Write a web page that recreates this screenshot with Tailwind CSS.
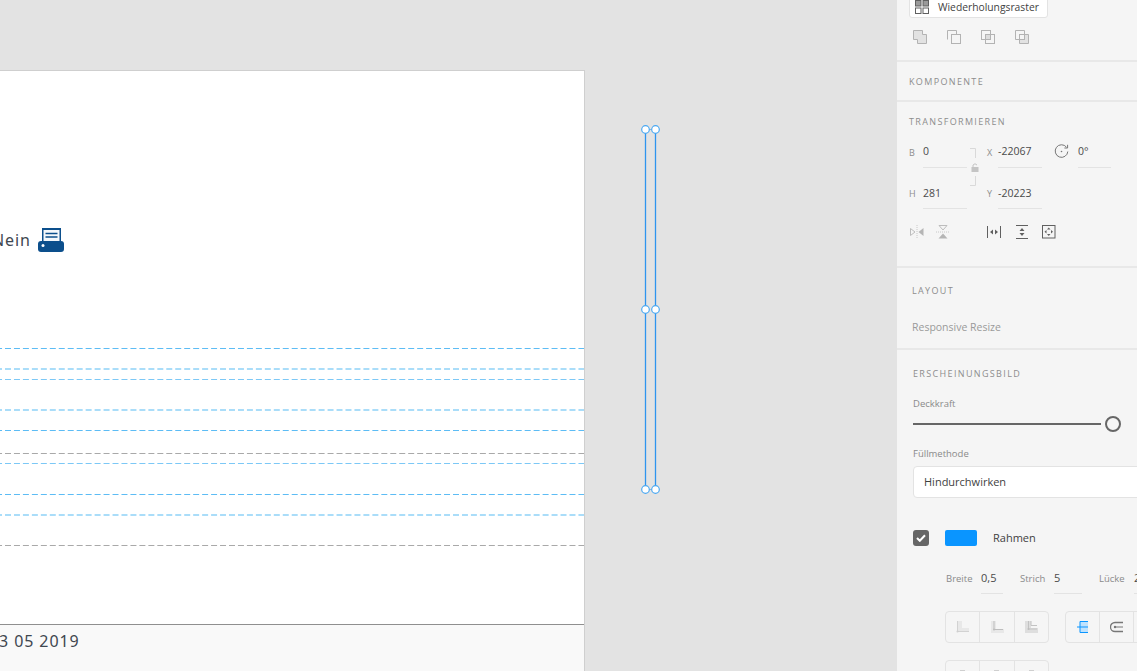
<!DOCTYPE html>
<html lang="de">
<head>
<meta charset="UTF-8">
<title>Eigenschaften</title>
<script src="https://cdn.jsdelivr.net/npm/@tailwindcss/browser@4"></script>
</head>
<body class="overflow-hidden">
<div class="flex h-[671px] w-[1137px] overflow-hidden font-['Open_Sans',sans-serif]">

  <!-- Canvas -->
  <div class="relative h-full w-[897px] shrink-0 overflow-hidden bg-[#e3e3e3]">
    <!-- Artboard -->
    <div class="absolute left-0 top-[70px] flex h-[601px] w-[585px] flex-col border-r border-t border-[#cfcfcf] bg-white">
      <div class="relative h-[553px] shrink-0">
        <div class="absolute left-[-8px] top-[157px] flex items-center gap-[7px]">
          <span class="font-['Noto_Sans',sans-serif] text-[16px] leading-5 tracking-[0.9px] text-[#3f4750]">Nein</span>
          <svg width="26" height="24" viewBox="0 0 26 24">
            <rect x="4" y="0" width="19" height="15" fill="#0c4f8c"/>
            <rect x="5.5" y="2" width="16" height="12" fill="#f4f8fb"/>
            <path d="M7.5 5.5h12M7.5 9h12" stroke="#0c4f8c" stroke-width="1.5"/>
            <path d="M3 13h20q3 0 3 3v5q0 3-3 3H3q-3 0-3-3v-5q0-3 3-3z" fill="#0c4f8c"/>
            <circle cx="5" cy="17.5" r="1.5" fill="#fff"/>
          </svg>
        </div>
      </div>
      <div class="flex-1 border-t border-[#8f8f8f] bg-[#f9f9f9]">
        <p class="ml-[-11px] mt-[6px] font-['Noto_Sans',sans-serif] text-[16px] leading-5 tracking-[0.9px] text-[#3f4750]">13 05 2019</p>
      </div>
    </div>

    <!-- Guide lines and selection -->
    <svg class="absolute left-0 top-0" width="897" height="671" fill="none">
      <g stroke-dasharray="6 2.96" stroke-dashoffset="3.96" stroke-width="1">
        <path d="M0 348.5H584" stroke="#5cbcf5"/>
        <path d="M0 369H584" stroke="#8fd2f8" stroke-width="1.4"/>
        <path d="M0 379.5H584" stroke="#7cc8f6"/>
        <path d="M0 410H584" stroke="#8fd2f8" stroke-width="1.4"/>
        <path d="M0 430.5H584" stroke="#5cbcf5"/>
        <path d="M0 453.5H584" stroke="#a9a9a9"/>
        <path d="M0 463.5H584" stroke="#7cc8f6"/>
        <path d="M0 494.5H584" stroke="#5cbcf5"/>
        <path d="M0 515H584" stroke="#8fd2f8" stroke-width="1.4"/>
        <path d="M0 545.5H584" stroke="#a9a9a9"/>
      </g>
      <path d="M645.5 129V489M655.5 129V489" stroke="#2f95ee" stroke-width="1.3"/>
      <path d="M645.5 129.5H655.5M645.5 489.5H655.5" stroke="#8fb4d4"/>
      <g fill="#fff" stroke="#4aa8f2" stroke-width="1.2">
        <circle cx="645.5" cy="129.5" r="3.8"/>
        <circle cx="655.5" cy="129.5" r="3.8"/>
        <circle cx="645.5" cy="309.5" r="3.8"/>
        <circle cx="655.5" cy="309.5" r="3.8"/>
        <circle cx="645.5" cy="489.5" r="3.8"/>
        <circle cx="655.5" cy="489.5" r="3.8"/>
      </g>
    </svg>
  </div>

  <!-- Property panel -->
  <div class="h-full w-[240px] shrink-0 overflow-hidden bg-[#f5f5f5] text-[#3f3f3f]">

    <div class="h-[60px] overflow-hidden pl-3">
      <div class="mt-[-4px] flex h-[22px] w-[139px] items-start gap-[9px] rounded-[3px] border border-[#e3e3e3] bg-white pl-[5px]">
        <svg class="mt-[3px]" width="14" height="14" viewBox="0 0 14 14" fill="none" stroke="#606060">
          <rect x="0.5" y="0.5" width="5.5" height="5.5" fill="#9a9a9a"/>
          <rect x="8" y="0.5" width="5.5" height="5.5" fill="#9a9a9a"/>
          <rect x="0.5" y="8" width="5.5" height="5.5"/>
          <rect x="8" y="8" width="5.5" height="5.5"/>
        </svg>
        <span class="mt-[2px] text-[10.3px] leading-4 text-[#3f3f3f]">Wiederholungsraster</span>
      </div>
      <div class="ml-[4px] mt-[12px] flex gap-[20px]">
        <svg width="14" height="14" viewBox="0 0 14 14" fill="none" stroke="#b3b3b3">
          <path d="M0.5 0.5H9.5V4.5H13.5V13.5H4.5V9.5H0.5Z" fill="#e2e2e2"/>
        </svg>
        <svg width="14" height="14" viewBox="0 0 14 14" fill="none" stroke="#b3b3b3">
          <path d="M0.5 9.5V0.5H9.5V4.5"/><rect x="4.5" y="4.5" width="9" height="9" fill="#f5f5f5"/>
        </svg>
        <svg width="14" height="14" viewBox="0 0 14 14" fill="none" stroke="#b3b3b3">
          <rect x="0.5" y="0.5" width="9" height="9"/><rect x="4.5" y="4.5" width="9" height="9"/><rect x="5" y="5" width="4" height="4" fill="#dcdcdc" stroke="none"/>
        </svg>
        <svg width="14" height="14" viewBox="0 0 14 14" fill="none" stroke="#b3b3b3">
          <path d="M0.5 0.5H9.5V4.5H4.5V9.5H0.5Z"/><path d="M4.5 4.5H13.5V13.5H4.5Z" fill="#e2e2e2"/><rect x="4.5" y="4.5" width="5" height="5" fill="#f5f5f5"/>
        </svg>
      </div>
    </div>

    <section class="flex h-[40px] items-center border-t-2 border-[#e8e8e8] pl-3 pt-[2px]">
      <h3 class="text-[9px] leading-3 tracking-[1.35px] text-[#8d8d8d]">KOMPONENTE</h3>
    </section>

    <section class="h-[166px] border-t-2 border-[#e8e8e8] pl-3 pt-[14px]">
      <h3 class="text-[9px] leading-3 tracking-[1.35px] text-[#8d8d8d]">TRANSFORMIEREN</h3>
      <div class="relative mt-[15px] flex h-[25px] text-[10.5px] leading-4 text-[#4a4a4a]">
        <span class="mt-[2px] w-[14px] text-[9px] text-[#8d8d8d]">B</span>
        <span class="w-[44px] border-b border-[#e3e3e3]">0</span>
        <span class="ml-[20px] mt-[2px] w-[11px] text-[9px] text-[#8d8d8d]">X</span>
        <span class="w-[44px] border-b border-[#e3e3e3]">-22067</span>
        <svg class="ml-[12px] mt-[1px]" width="15" height="15" viewBox="0 0 15 15" fill="none" stroke="#777">
          <path d="M12.5 3.2A6.3 6.3 0 1 0 13.8 7.5"/><path d="M13.6 0.8V4H10.4"/><circle cx="7.5" cy="7.5" r="0.8" fill="#777" stroke="none"/>
        </svg>
        <span class="ml-[9px] w-[33px] border-b border-[#e3e3e3]">0°</span>
        <svg class="absolute left-[60px] top-[5px]" width="14" height="38" viewBox="0 0 14 38" fill="none" stroke="#d9d9d9">
          <path d="M1 0.5H6.5V10M6.5 28V37.5H1"/>
          <rect x="2.5" y="19" width="7" height="5" fill="#c4c4c4" stroke="none"/><path d="M4 19V17Q6 14.5 8 17" stroke="#c4c4c4"/>
        </svg>
      </div>
      <div class="mt-[17px] flex h-[24px] text-[10.5px] leading-4 text-[#4a4a4a]">
        <span class="mt-[1px] w-[14px] text-[9px] text-[#8d8d8d]">H</span>
        <span class="w-[44px] border-b border-[#e3e3e3]">281</span>
        <span class="ml-[20px] mt-[1px] w-[11px] text-[9px] text-[#8d8d8d]">Y</span>
        <span class="w-[44px] border-b border-[#e3e3e3]">-20223</span>
      </div>
      <div class="mt-[16px] flex items-center">
        <svg width="14" height="14" viewBox="0 0 14 14" class="ml-[1px]" fill="none">
          <path d="M0.5 3.5L5 7L0.5 10.5Z" stroke="#bdbdbd"/><path d="M13.5 3L8.5 7L13.5 11Z" fill="#b5b5b5"/><path d="M7 0V14" stroke="#c8c8c8" stroke-dasharray="1 1"/>
        </svg>
        <svg width="14" height="14" viewBox="0 0 14 14" class="ml-[12px]" fill="none">
          <path d="M3 0.5H11L7 5Z" stroke="#bdbdbd"/><path d="M2.5 13.5L7 8.5L11.5 13.5Z" fill="#b5b5b5"/><path d="M0 7H14" stroke="#c8c8c8" stroke-dasharray="1 1"/>
        </svg>
        <svg width="14" height="14" viewBox="0 0 14 14" class="ml-[37px]" fill="none">
          <path d="M0.5 1V13M13.5 1V13" stroke="#606060"/><path d="M3 7L6 4.5V9.5ZM11 7L8 4.5V9.5Z" fill="#606060"/>
        </svg>
        <svg width="14" height="14" viewBox="0 0 14 14" class="ml-[14px]" fill="none">
          <path d="M1 0.5H13M1 13.5H13" stroke="#606060"/><path d="M7 3L9.5 6H4.5ZM7 11L4.5 8H9.5Z" fill="#606060"/>
        </svg>
        <svg width="14" height="14" viewBox="0 0 14 14" class="ml-[13px]" fill="none">
          <rect x="0.5" y="0.5" width="12.5" height="12.5" stroke="#606060"/><path d="M6.75 2.5L8.5 4.5H5ZM6.75 11L5 9H8.5ZM2.5 6.75L4.5 5V8.5ZM11 6.75L9 8.5V5Z" fill="#606060"/>
        </svg>
      </div>
    </section>

    <section class="h-[82px] border-t-2 border-[#e8e8e8] pl-[15px] pt-[17px]">
      <h3 class="text-[9px] leading-3 tracking-[1.35px] text-[#8d8d8d]">LAYOUT</h3>
      <p class="mt-[22px] text-[10.5px] leading-4 text-[#9a9a9a]">Responsive Resize</p>
    </section>

    <section class="border-t-2 border-[#e8e8e8] pl-[16px] pt-[18px]">
      <h3 class="text-[9px] leading-3 tracking-[1.35px] text-[#8d8d8d]">ERSCHEINUNGSBILD</h3>
      <p class="mt-[18px] text-[9.5px] leading-3 text-[#8a8a8a]">Deckkraft</p>
      <div class="mt-[6px] flex h-4 items-center">
        <div class="h-[2px] w-[188px] bg-[#666]"></div>
        <div class="ml-[4px] size-[16px] rounded-full border-2 border-[#666] bg-[#f5f5f5]"></div>
      </div>
      <p class="mt-[16px] text-[9.5px] leading-3 text-[#8a8a8a]">Füllmethode</p>
      <div class="mt-[6px] flex h-[32px] w-[240px] items-center rounded-[4px] border border-[#e3e3e3] bg-white pl-[10px] text-[11px] text-[#3f3f3f]">Hindurchwirken</div>
      <div class="mt-[32px] flex h-4 items-center">
        <span class="flex size-[16px] items-center justify-center rounded-[3px] bg-[#666]">
          <svg width="10" height="8" viewBox="0 0 10 8" fill="none"><path d="M1 4L3.8 6.8L9 1.2" stroke="#fff" stroke-width="2"/></svg>
        </span>
        <span class="ml-[16px] h-[16px] w-[32px] rounded-[2px] bg-[#0a95ff]"></span>
        <span class="ml-[16px] text-[11px] text-[#3f3f3f]">Rahmen</span>
      </div>
      <div class="ml-[33px] mt-[24px] flex h-[24px] w-[220px] text-[9.5px]">
        <span class="mt-[2px] w-[35px] text-[#8a8a8a]">Breite</span>
        <span class="w-[22px] border-b border-[#e3e3e3] text-[11px] leading-4 text-[#4a4a4a]">0,5</span>
        <span class="ml-[17px] mt-[2px] w-[34px] text-[#8a8a8a]">Strich</span>
        <span class="w-[28px] border-b border-[#e3e3e3] text-[11px] leading-4 text-[#4a4a4a]">5</span>
        <span class="ml-[17px] mt-[2px] w-[35px] text-[#8a8a8a]">Lücke</span>
        <span class="border-b border-[#e3e3e3] text-[11px] leading-4 text-[#4a4a4a]">2</span>
      </div>
      <div class="ml-[32px] mt-[17px] flex w-[230px] gap-[16px]">
        <div class="flex h-[32px] w-[104px] divide-x divide-[#e3e3e3] rounded-[4px] border border-[#e3e3e3]">
          <span class="flex flex-1 items-center justify-center">
            <svg width="14" height="14" viewBox="0 0 14 14"><rect x="1" y="1" width="5" height="10" fill="#e8e8e8"/><rect x="1" y="8" width="12" height="3" fill="#e8e8e8"/><path d="M1.5 1V11.5H13" fill="none" stroke="#d2d2d2"/><circle cx="1.5" cy="11.5" r="1" fill="#cfcfcf"/></svg>
          </span>
          <span class="flex flex-1 items-center justify-center">
            <svg width="14" height="14" viewBox="0 0 14 14"><rect x="1" y="1" width="5" height="12" fill="#e8e8e8"/><rect x="1" y="9" width="13" height="4" fill="#e8e8e8"/><path d="M4 1V9.5H13" fill="none" stroke="#bdbdbd"/><circle cx="4" cy="9.5" r="1" fill="#bdbdbd"/></svg>
          </span>
          <span class="flex flex-1 items-center justify-center">
            <svg width="14" height="14" viewBox="0 0 14 14"><rect x="1" y="1" width="6" height="12" fill="#dedede"/><rect x="1" y="8" width="13" height="5" fill="#dedede"/><path d="M4.5 1V9H13M7 1V5.5H13" fill="none" stroke="#c2c2c2"/><circle cx="4.5" cy="9" r="1" fill="#bdbdbd"/></svg>
          </span>
        </div>
        <div class="flex h-[32px] w-[110px] divide-x divide-[#e3e3e3] rounded-[4px] border border-[#e3e3e3]">
          <span class="flex w-[34px] items-center justify-center">
            <svg width="14" height="14" viewBox="0 0 14 14" fill="none"><rect x="4" y="1" width="8" height="12" fill="#bfe2fd"/><path d="M12 1.5H4V12.5H12M1 7H12" stroke="#0a95ff"/></svg>
          </span>
          <span class="flex w-[34px] items-center justify-center">
            <svg width="14" height="14" viewBox="0 0 14 14" fill="none"><path d="M13 2.5H5A4.5 4.5 0 0 0 5 11.5H13" stroke="#777" stroke-width="1.3"/><path d="M4 7H13" stroke="#777"/><circle cx="5" cy="7" r="1.2" fill="#777"/></svg>
          </span>
          <span class="flex-1"></span>
        </div>
      </div>
      <div class="ml-[32px] mt-[17px] flex h-[32px] w-[104px] divide-x divide-[#e3e3e3] rounded-[4px] border border-[#e3e3e3]">
        <span class="flex flex-1 justify-center pt-[9px]"><span class="h-[4px] w-[5px] bg-[#cfcfcf]"></span></span>
        <span class="flex flex-1 justify-center pt-[9px]"><span class="h-[4px] w-[5px] bg-[#cfcfcf]"></span></span>
        <span class="flex flex-1 justify-center pt-[9px]"><span class="h-[4px] w-[5px] bg-[#cfcfcf]"></span></span>
      </div>
    </section>
  </div>
</div>
</body>
</html>
